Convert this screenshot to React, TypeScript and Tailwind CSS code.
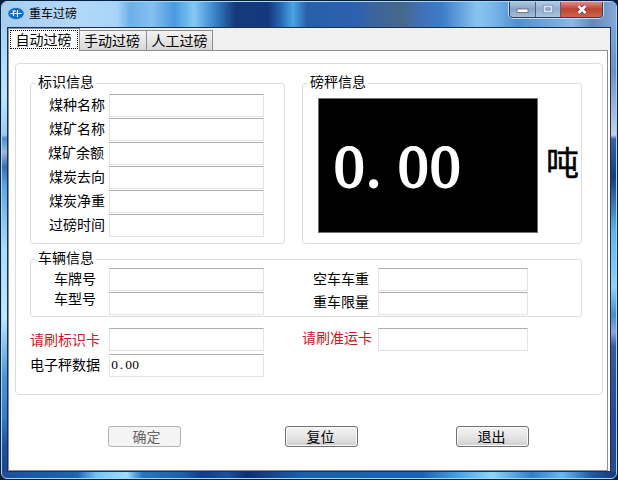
import type { ReactNode } from "react";

function Field({ label, labelClass = "", boxClass = "w-[155px]", value }: { label: string; labelClass?: string; boxClass?: string; value?: string }) {
  return (
    <div className="flex h-6 items-start">
      <span className={`h-[23px] shrink-0 leading-[23px] ${labelClass}`}>{label}</span>
      <div className={`h-[23px] shrink-0 border border-[#e2e3e6] border-t-[#abadb3] bg-white pl-[1px] text-[13.5px] leading-[20px] ${boxClass}`}>{value && <Digits value={value} cell="w-[7px] text-center" />}</div>
    </div>
  );
}

function Digits({ value, cell }: { value: string; cell: string }) {
  return (
    <span className="flex font-['Liberation_Serif',serif]">
      {value.split("").map((c, i) => (
        <span key={i} className={cell}>{c}</span>
      ))}
    </span>
  );
}

function Group({ title, className, children }: { title: string; className: string; children: ReactNode }) {
  return (
    <section className={`rounded-[3px] border border-[#dcdcdc] ${className}`}>
      <h2 className="-mt-3 ml-[5px] h-5 w-fit bg-white px-[2px] leading-5">{title}</h2>
      {children}
    </section>
  );
}

function Tab({ label, className }: { label: string; className: string }) {
  return <div className={`flex justify-center border border-b-0 border-[#8c8e94] ${className}`}>{label}</div>;
}

function Button({ label, disabled }: { label: string; disabled?: boolean }) {
  return (
    <button
      className={`h-[21px] w-[73px] rounded-[3px] border leading-[18px] ${disabled ? "border-[#adb2b5] bg-[#f4f4f4] pl-1 text-[#666]" : "border-[#707070] bg-linear-to-b from-[#f2f2f2] via-[#e6e6e6] to-[#cfcfcf] pr-[2px] shadow-[inset_0_0_0_1px_#fafafa]"}`}
    >
      {label}
    </button>
  );
}

export default function App() {
  return (
    <div className="flex h-[480px] w-[618px] flex-col overflow-hidden bg-[#0a1c3c] pt-px pl-px font-['Liberation_Sans','Noto_Sans_CJK_SC',sans-serif] text-[14px] text-black">
      <div className="flex h-[478px] w-[616px] flex-col overflow-hidden rounded-[6px] border border-[#9bdcfa] bg-[#3c78b8]">
        <header className="flex h-[25px] shrink-0 bg-[linear-gradient(90deg,#a5cdf0_0,#b4d8f8_70px,#a8d4f8_115px,#6cb0ea_128px,#85c0f0_150px,#4a9ae0_172px,#84c8f4_192px,#3a86cc_212px,#153a7c_233px,#14387c_266px,#2464b0_278px,#4aa4e4_291px,#2860a8_305px,#2c60b0_355px,#3a649c_370px,#48688c_402px,#4070b8_418px,#3c7cc8_440px,#88c4f0_475px,#7ab8ea_490px,#5090d0_515px,#6ea4dc_545px,#8cb8e8_570px,#6488b8_590px,#84a8d8_614px)]">
          <svg className="mt-[5px] ml-[6px] h-[13px] w-4" viewBox="0 0 16 13">
            <ellipse cx="8" cy="6.5" rx="7.8" ry="5.8" fill="#1470c0" />
            <path d="M2.5 6.5H13.5M4.5 4H8M5.5 4V9M9.5 3V10" fill="none" stroke="#fff" strokeWidth="1.1" />
          </svg>
          <h1 className="ml-[5px] text-[12px] leading-[24px]">重车过磅</h1>
          <div className="-mt-px ml-auto mr-[13px] flex h-[17px] w-[94px] overflow-hidden rounded-b-[4px] border border-t-0 border-[#30405c] shadow-[0_0_0_1px_#c0dcf4]">
            <div className="flex w-[26px] items-center justify-center border-r border-[#50607c] bg-linear-to-b from-[#b8cadc] via-[#88a4c4] to-[#a4bcd8]">
              <svg width="13" height="10" viewBox="0 0 13 10"><rect x="1" y="5" width="11" height="3.5" fill="#fff" stroke="#59616e" strokeWidth=".8" /></svg>
            </div>
            <div className="flex w-[25px] items-center justify-center border-r border-[#50607c] bg-linear-to-b from-[#b8cce0] via-[#90b0d4] to-[#a8c4e0]">
              <svg width="12" height="10" viewBox="0 0 12 10"><rect x="2.5" y="2.5" width="7" height="5" fill="none" stroke="#61748e" strokeWidth="3.2" /><rect x="2.5" y="2.5" width="7" height="5" fill="none" stroke="#dae8f6" strokeWidth="2" /></svg>
            </div>
            <div className="flex flex-1 items-center justify-center bg-linear-to-b from-[#dc9888] via-[#bc4430] to-[#d06444]">
              <svg width="12" height="11" viewBox="0 0 12 11"><path d="M2.5 2L9.5 9M9.5 2L2.5 9" stroke="#603838" strokeWidth="4" /><path d="M2.5 2L9.5 9M9.5 2L2.5 9" stroke="#fff" strokeWidth="2.7" /></svg>
            </div>
          </div>
        </header>

        <div className="flex h-[445px] shrink-0">
          <div className="w-[5px] shrink-0 bg-[linear-gradient(180deg,#a8d0f4_0,#c0e4fc_70px,#a0c8f0_108px,#4890d0_111px,#a0b8e0_125px,#3870b0_140px,#5ca8e4_160px,#a8dcf8_220px,#c0e8fc_290px,#4898d8_350px,#3080c8_390px,#1c50a0_420px,#1c4888_445px)]" />
          <main className="flex h-[445px] w-[604px] shrink-0 flex-col border border-[#183058] bg-white">
            <nav className="flex h-[22px] shrink-0 items-end bg-[#f0f0f0] leading-[21px]">
              <Tab label="自动过磅" className="relative -mb-px h-[23px] w-[72px] bg-white p-[2px] pr-[3px] leading-[18px] outline-1 -outline-offset-3 outline-dotted outline-black" />
              <Tab label="手动过磅" className="h-[20px] w-[67px] border-l-0 bg-linear-to-b from-[#f3f3f3] to-[#d8d8d8] pr-[2px]" />
              <Tab label="人工过磅" className="h-[20px] w-[66px] border-l-0 bg-linear-to-b from-[#f3f3f3] to-[#d8d8d8]" />
            </nav>
            <div className="h-[421px] w-[600px] shrink-0 border border-[#8c8e94] bg-white pt-[12px] pl-[6px]">
              <div className="h-[332px] w-[588px] rounded-[4px] border border-[#dcdcdc] pt-[19px] pl-[14px]">
                <div className="flex gap-[17px]">
                  <Group title="标识信息" className="h-[161px] w-[255px]">
                    <div className="pt-[2px] pl-[18px]">
                      <Field label="煤种名称" labelClass="w-[60px]" />
                      <Field label="煤矿名称" labelClass="w-[60px]" />
                      <Field label="煤矿余额" labelClass="w-[60px] -indent-px" />
                      <Field label="煤炭去向" labelClass="w-[60px]" />
                      <Field label="煤炭净重" labelClass="w-[60px]" />
                      <Field label="过磅时间" labelClass="w-[60px]" />
                    </div>
                  </Group>
                  <Group title="磅秤信息" className="h-[161px] w-[280px]">
                    <div className="flex pt-[6px] pl-[15px]">
                      <div className="h-[135px] w-[220px] border border-[#707070] bg-black pt-[34px] pl-[15px] text-[61px] leading-[68px] text-white [-webkit-text-stroke:2px_white]">
                        <Digits value="0.00" cell="w-8" />
                      </div>
                      <span className="mt-[49px] ml-[8px] text-[33px] leading-[34px] [-webkit-text-stroke:0.4px_black]">吨</span>
                    </div>
                  </Group>
                </div>
                <Group title="车辆信息" className="mt-[15px] h-[58px] w-[552px]">
                  <div className="flex">
                    <div className="pl-[23px]">
                      <Field label="车牌号" labelClass="w-[55px]" />
                      <Field label="车型号" labelClass="w-[55px] -mt-1" />
                    </div>
                    <div className="pl-[49px]">
                      <Field label="空车车重" labelClass="w-[65px]" boxClass="w-[150px]" />
                      <Field label="重车限量" labelClass="w-[65px] -mt-px" boxClass="w-[150px]" />
                    </div>
                  </div>
                </Group>
                <div className="mt-[11px] flex">
                  <div className="flex w-[272px] flex-col gap-[2px]">
                    <Field label="请刷标识卡" labelClass="w-[79px] text-[#c41a20] mt-px" />
                    <Field label="电子秤数据" labelClass="w-[79px]" value="0.00" />
                  </div>
                  <Field label="请刷准运卡" labelClass="w-[76px] text-[#c41a20] -mt-px" boxClass="w-[150px]" />
                </div>
              </div>
              <div className="mt-[31px] ml-[93px] flex">
                <Button label="确定" disabled />
                <div className="ml-[104px] mr-[98px]"><Button label="复位" /></div>
                <Button label="退出" />
              </div>
            </div>
          </main>
          <div className="w-[6px] bg-[linear-gradient(180deg,#7ca4d8_0,#7090c4_45px,#c8d0ec_108px,#3860a8_112px,#183c80_150px,#58b8f0_205px,#90d0f8_260px,#4090d0_288px,#90a4d8_305px,#3858a0_320px,#28489c_400px,#284890_445px)]" />
        </div>
        <footer className="flex-1 bg-[linear-gradient(90deg,#1c509c_0,#1c64b4_75px,#78c4f4_95px,#a0dcfc_125px,#2874c0_140px,#1c60b0_180px,#103c88_200px,#1c50a0_225px,#102c70_245px,#183c80_260px,#1860b0_300px,#1864b4_420px,#50a8e8_460px,#90d4f8_490px,#3080c8_530px,#68b8f0_560px,#2058a0_590px,#183878_614px)]" />
      </div>
    </div>
  );
}
